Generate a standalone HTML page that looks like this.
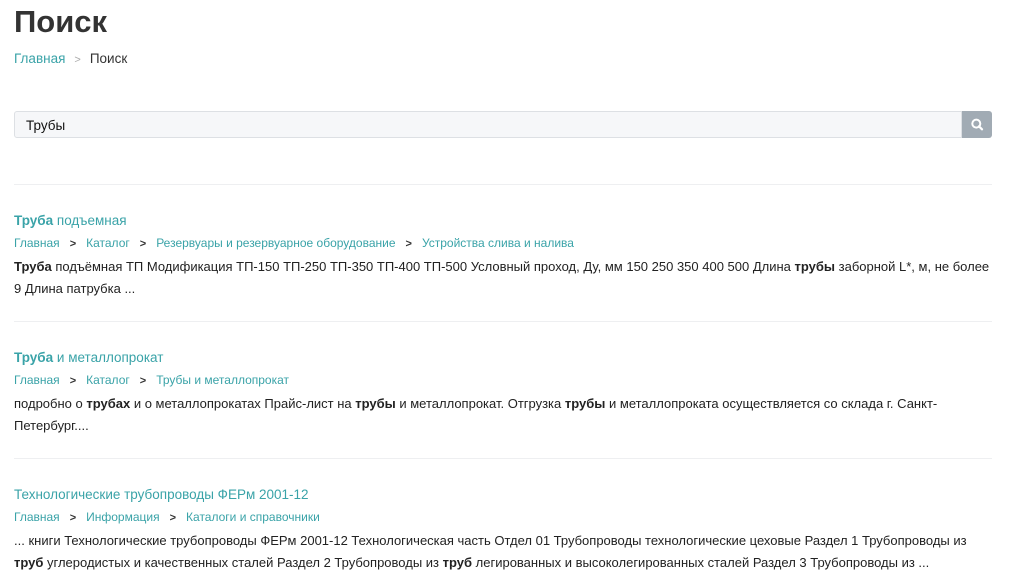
<html><head><style>
body{margin:0;background:#fff;font-family:"Liberation Sans",sans-serif;color:#222;width:1018px;height:574px;overflow:hidden;position:relative}
.a{position:absolute;left:14px;white-space:nowrap}
h1{position:absolute;left:14px;top:4px;margin:0;font-size:31px;font-weight:bold;color:#333}
.teal{color:#3aa3a8}
.bc{top:51px;font-size:13.5px}
.inp{position:absolute;left:14px;top:111px;width:946px;height:25px;border:1px solid #dde0e4;background:#f6f7f9;border-radius:3px 0 0 3px}
.inp span{position:absolute;left:11px;top:6px;font-size:13.5px;color:#111}
.btn{position:absolute;left:962px;top:111px;width:30px;height:27px;background:#a1abb4;border-radius:0 3px 3px 0}
.hr{position:absolute;left:14px;width:978px;height:1px;background:#eeeff1}
.t{font-size:13.5px;color:#3aa3a8}
.c{font-size:12px;color:#3aa3a8}
.c b{color:#333;margin:0 10px;font-size:11px}
.p{font-size:13px;color:#222;line-height:22px}
</style></head><body>
<h1>Поиск</h1>
<div class="a bc"><span class="teal">Главная</span><span style="color:#aaa;margin:0 9px;font-size:11px">&gt;</span><span style="color:#333">Поиск</span></div>
<div class="inp"><span>Трубы</span></div>
<div class="btn"><svg width="30" height="27" viewBox="0 0 30 27"><circle cx="14.3" cy="12.6" r="4" fill="none" stroke="#fff" stroke-width="2"/><path d="M17 15.3l3 3" stroke="#fff" stroke-width="2.2" stroke-linecap="round"/></svg></div>
<div class="hr" style="top:184px"></div>

<div class="a t" style="top:213px"><b>Труба</b> подъемная</div>
<div class="a c" style="top:236px">Главная<b>&gt;</b>Каталог<b>&gt;</b>Резервуары и резервуарное оборудование<b>&gt;</b>Устройства слива и налива</div>
<div class="a p" style="top:256px"><b>Труба</b> подъёмная ТП Модификация ТП-150 ТП-250 ТП-350 ТП-400 ТП-500 Условный проход, Ду, мм 150 250 350 400 500 Длина <b>трубы</b> заборной L*, м, не более<br>9 Длина патрубка ...</div>
<div class="hr" style="top:321px"></div>

<div class="a t" style="top:350px"><b>Труба</b> и металлопрокат</div>
<div class="a c" style="top:373px">Главная<b>&gt;</b>Каталог<b>&gt;</b>Трубы и металлопрокат</div>
<div class="a p" style="top:393px">подробно о <b>трубах</b> и о металлопрокатах Прайс-лист на <b>трубы</b> и металлопрокат. Отгрузка <b>трубы</b> и металлопроката осуществляется со склада г. Санкт-<br>Петербург....</div>
<div class="hr" style="top:458px"></div>

<div class="a t" style="top:487px">Технологические трубопроводы ФЕРм 2001-12</div>
<div class="a c" style="top:510px">Главная<b>&gt;</b>Информация<b>&gt;</b>Каталоги и справочники</div>
<div class="a p" style="top:530px">... книги Технологические трубопроводы ФЕРм 2001-12 Технологическая часть Отдел 01 Трубопроводы технологические цеховые Раздел 1 Трубопроводы из<br><b>труб</b> углеродистых и качественных сталей Раздел 2 Трубопроводы из <b>труб</b> легированных и высоколегированных сталей Раздел 3 Трубопроводы из ...</div>
</body></html>
